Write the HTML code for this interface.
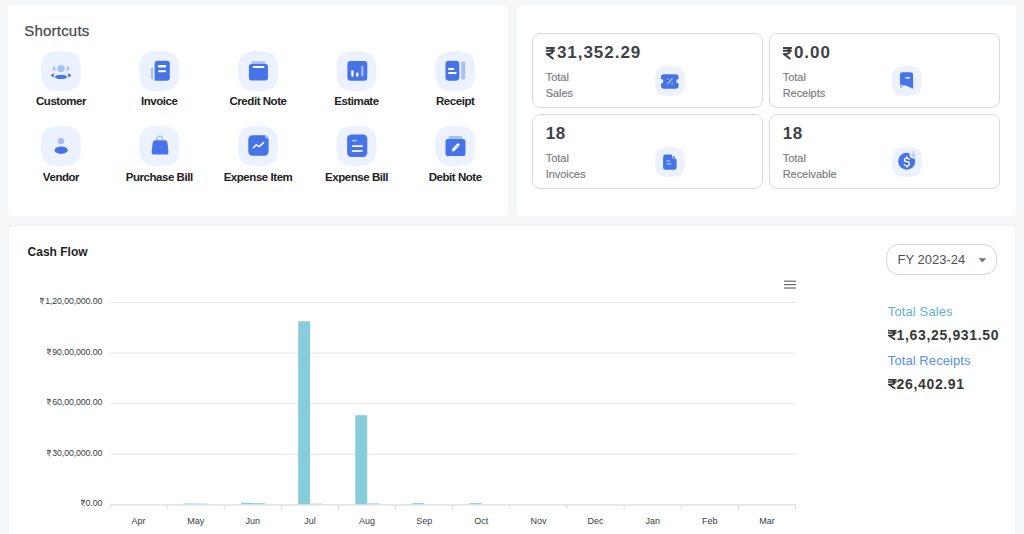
<!DOCTYPE html>
<html><head><meta charset="utf-8"><style>
html,body{margin:0;padding:0}
body{width:1024px;height:534px;overflow:hidden;background:#f5f6f8;position:relative;font-family:"Liberation Sans",sans-serif}
.t{position:absolute;white-space:nowrap;line-height:1}
.a{position:absolute;overflow:visible}
.p{position:absolute;background:#fff;border-radius:5px}
.card{position:absolute;width:229px;height:73px;border:1px solid #dadada;border-radius:8px}
.dd{position:absolute;border:1px solid #d4d4d4;border-radius:13px;box-sizing:border-box}
</style></head><body>
<div class="p" style="left:8px;top:5px;width:499.5px;height:211px"></div>
<div class="p" style="left:516.5px;top:5px;width:499.5px;height:211px"></div>
<div class="p" style="left:8.5px;top:225.5px;width:1006.5px;height:330px;box-shadow:0 0 1.5px rgba(0,0,0,0.07)"></div>
<div class="t" style="left:24.30px;top:23.10px;font-size:15px;font-weight:400;color:#484a4f;-webkit-text-stroke:0.25px #484a4f;letter-spacing:0.2px">Shortcuts</div>
<svg class="a" style="left:41px;top:51px" width="41" height="41" viewBox="0 0 41 41"><g transform="translate(0.00 0.00)"><path d="M20 0C35.5 0 40 4.5 40 20C40 35.5 35.5 40 20 40C4.5 40 0 35.5 0 20C0 4.5 4.5 0 20 0Z" fill="#ebf1fe"/><g transform="translate(5 5)"><circle cx="15" cy="12.6" r="3.7" fill="#a9c0f6"/>
   <path d="M10.2 9.6C7.4 10.4 6.6 11.6 6.6 12.6C6.6 13.6 7.4 14.8 10.2 15.6C9.2 14.6 8.9 13.6 8.9 12.6C8.9 11.6 9.2 10.6 10.2 9.6Z" fill="#a9c0f6"/>
   <path d="M19.8 9.6C22.6 10.4 23.4 11.6 23.4 12.6C23.4 13.6 22.6 14.8 19.8 15.6C20.8 14.6 21.1 13.6 21.1 12.6C21.1 11.6 20.8 10.6 19.8 9.6Z" fill="#a9c0f6"/>
   <ellipse cx="15" cy="20.9" rx="6" ry="2.2" fill="#4673e8"/>
   <path d="M9 17.2C6.4 17.8 4.8 18.6 4.8 19.6C4.8 20.4 6.2 21.1 8.6 21.6C7.9 20.9 7.6 20.2 7.6 19.6C7.6 18.8 8.1 18 9 17.2Z" fill="#4673e8"/>
   <path d="M21 17.2C23.6 17.8 25.2 18.6 25.2 19.6C25.2 20.4 23.8 21.1 21.4 21.6C22.1 20.9 22.4 20.2 22.4 19.6C22.4 18.8 21.9 18 21 17.2Z" fill="#4673e8"/></g></g></svg>
<div class="t" style="left:1.00px;top:96.47px;width:120px;text-align:center;font-size:11.5px;font-weight:700;color:#222;letter-spacing:-0.45px">Customer</div>
<svg class="a" style="left:139px;top:51px" width="41" height="41" viewBox="0 0 41 41"><g transform="translate(0.20 0.00)"><path d="M20 0C35.5 0 40 4.5 40 20C40 35.5 35.5 40 20 40C4.5 40 0 35.5 0 20C0 4.5 4.5 0 20 0Z" fill="#ebf1fe"/><g transform="translate(5 5)"><path d="M6.4 12.2L9 11.6V23.8L6.8 22.6Z" fill="#a9c0f6"/>
   <path d="M13.4 4.8H22.6Q25.6 4.8 25.6 7.8V21.7Q25.6 24.7 22.6 24.7H10.4Q10.4 24.7 10.4 22.7V7.8Q10.4 4.8 13.4 4.8Z" fill="#4673e8"/>
   <rect x="13.8" y="9" width="8.1" height="2.5" rx="1.25" fill="#fff"/>
   <rect x="13.8" y="14.3" width="8.1" height="2" rx="1" fill="#fff"/></g></g></svg>
<div class="t" style="left:99.20px;top:96.47px;width:120px;text-align:center;font-size:11.5px;font-weight:700;color:#222;letter-spacing:-0.45px">Invoice</div>
<svg class="a" style="left:238px;top:51px" width="41" height="41" viewBox="0 0 41 41"><g transform="translate(0.00 0.00)"><path d="M20 0C35.5 0 40 4.5 40 20C40 35.5 35.5 40 20 40C4.5 40 0 35.5 0 20C0 4.5 4.5 0 20 0Z" fill="#ebf1fe"/><g transform="translate(5 5)"><rect x="8.4" y="5.2" width="13.8" height="4" rx="1" fill="#a9c0f6"/>
   <rect x="5.9" y="7.9" width="19.1" height="16.5" rx="2.6" fill="#4673e8"/>
   <rect x="9.8" y="10.1" width="11.5" height="2" rx="0.6" fill="#fff"/></g></g></svg>
<div class="t" style="left:198.00px;top:96.47px;width:120px;text-align:center;font-size:11.5px;font-weight:700;color:#222;letter-spacing:-0.45px">Credit Note</div>
<svg class="a" style="left:336px;top:51px" width="41" height="41" viewBox="0 0 41 41"><g transform="translate(0.50 0.00)"><path d="M20 0C35.5 0 40 4.5 40 20C40 35.5 35.5 40 20 40C4.5 40 0 35.5 0 20C0 4.5 4.5 0 20 0Z" fill="#ebf1fe"/><g transform="translate(5 5)"><rect x="5.9" y="5" width="19.9" height="19.7" rx="3" fill="#4673e8"/>
   <rect x="9.8" y="14.3" width="2.3" height="6.5" rx="1" fill="#fff"/>
   <rect x="14.6" y="16.6" width="2.3" height="4.2" rx="1" fill="#fff"/>
   <rect x="19.7" y="9.8" width="2.2" height="10.4" rx="0.8" fill="#a9c0f6"/></g></g></svg>
<div class="t" style="left:296.50px;top:96.47px;width:120px;text-align:center;font-size:11.5px;font-weight:700;color:#222;letter-spacing:-0.45px">Estimate</div>
<svg class="a" style="left:435px;top:51px" width="41" height="41" viewBox="0 0 41 41"><g transform="translate(0.20 0.00)"><path d="M20 0C35.5 0 40 4.5 40 20C40 35.5 35.5 40 20 40C4.5 40 0 35.5 0 20C0 4.5 4.5 0 20 0Z" fill="#ebf1fe"/><g transform="translate(5 5)"><rect x="5.3" y="4.8" width="13.8" height="19.9" rx="3.4" fill="#4673e8"/>
   <rect x="7.9" y="12.1" width="6.1" height="1.9" rx="0.4" fill="#fff"/>
   <rect x="7.9" y="16" width="8.4" height="2" rx="0.4" fill="#fff"/>
   <path d="M21 5.6H25V22.4L23 24L21 22.4Z" fill="#a9c0f6"/></g></g></svg>
<div class="t" style="left:395.20px;top:96.47px;width:120px;text-align:center;font-size:11.5px;font-weight:700;color:#222;letter-spacing:-0.45px">Receipt</div>
<svg class="a" style="left:41px;top:126px" width="41" height="41" viewBox="0 0 41 41"><g transform="translate(0.00 0.00)"><path d="M20 0C35.5 0 40 4.5 40 20C40 35.5 35.5 40 20 40C4.5 40 0 35.5 0 20C0 4.5 4.5 0 20 0Z" fill="#ebf1fe"/><g transform="translate(5 5)"><circle cx="15" cy="10.1" r="3.3" fill="#a9c0f6"/>
   <ellipse cx="15.2" cy="19.2" rx="6.6" ry="3.7" fill="#4673e8"/></g></g></svg>
<div class="t" style="left:1.00px;top:171.87px;width:120px;text-align:center;font-size:11.5px;font-weight:700;color:#222;letter-spacing:-0.45px">Vendor</div>
<svg class="a" style="left:139px;top:126px" width="41" height="41" viewBox="0 0 41 41"><g transform="translate(0.20 0.00)"><path d="M20 0C35.5 0 40 4.5 40 20C40 35.5 35.5 40 20 40C4.5 40 0 35.5 0 20C0 4.5 4.5 0 20 0Z" fill="#ebf1fe"/><g transform="translate(5 5)"><path d="M12.6 9.2C12.6 6.6 13.6 5.2 15.6 5.2C17.6 5.2 18.6 6.6 18.6 9.2" fill="none" stroke="#a9c0f6" stroke-width="1.4"/>
   <path d="M11.2 9.2H20.6Q22.8 9.2 23.2 11.6L24.2 20.4Q24.6 23.6 21.4 23.6H10.2Q7 23.6 7.4 20.4L8.6 11.6Q9 9.2 11.2 9.2Z" fill="#4673e8"/></g></g></svg>
<div class="t" style="left:99.20px;top:171.87px;width:120px;text-align:center;font-size:11.5px;font-weight:700;color:#222;letter-spacing:-0.45px">Purchase Bill</div>
<svg class="a" style="left:238px;top:126px" width="41" height="41" viewBox="0 0 41 41"><g transform="translate(0.00 0.00)"><path d="M20 0C35.5 0 40 4.5 40 20C40 35.5 35.5 40 20 40C4.5 40 0 35.5 0 20C0 4.5 4.5 0 20 0Z" fill="#ebf1fe"/><g transform="translate(5 5)"><rect x="5.3" y="4.3" width="20.3" height="20.4" rx="4.2" fill="#4673e8"/>
   <path d="M22.4 4.6Q25.4 5 25.5 7.6L22.4 7.6Z" fill="#a9c0f6"/>
   <path d="M10.3 16.8L13.3 13.8L16.3 15.6L20.5 11.6" fill="none" stroke="#fff" stroke-width="1.5" stroke-linecap="round" stroke-linejoin="round"/></g></g></svg>
<div class="t" style="left:198.00px;top:171.87px;width:120px;text-align:center;font-size:11.5px;font-weight:700;color:#222;letter-spacing:-0.45px">Expense Item</div>
<svg class="a" style="left:336px;top:126px" width="41" height="41" viewBox="0 0 41 41"><g transform="translate(0.50 0.00)"><path d="M20 0C35.5 0 40 4.5 40 20C40 35.5 35.5 40 20 40C4.5 40 0 35.5 0 20C0 4.5 4.5 0 20 0Z" fill="#ebf1fe"/><g transform="translate(5 5)"><rect x="5.6" y="3.6" width="20.2" height="22.4" rx="4.2" fill="#4673e8"/>
   <rect x="10.4" y="8.7" width="5" height="1.7" rx="0.85" fill="#a9c0f6"/>
   <rect x="10.7" y="14.3" width="10.6" height="1.8" rx="0.5" fill="#fff"/>
   <rect x="10.4" y="19.1" width="10.6" height="1.8" rx="0.5" fill="#dfe7fb"/></g></g></svg>
<div class="t" style="left:296.50px;top:171.87px;width:120px;text-align:center;font-size:11.5px;font-weight:700;color:#222;letter-spacing:-0.45px">Expense Bill</div>
<svg class="a" style="left:435px;top:126px" width="41" height="41" viewBox="0 0 41 41"><g transform="translate(0.20 0.00)"><path d="M20 0C35.5 0 40 4.5 40 20C40 35.5 35.5 40 20 40C4.5 40 0 35.5 0 20C0 4.5 4.5 0 20 0Z" fill="#ebf1fe"/><g transform="translate(5 5)"><rect x="8.4" y="5" width="13.5" height="4" rx="1" fill="#a9c0f6"/>
   <rect x="5.3" y="7.9" width="20" height="17.1" rx="2.6" fill="#4673e8"/>
   <path d="M13.2 18.7L17.9 13.9" stroke="#fff" stroke-width="3" stroke-linecap="round"/>
   <path d="M15.9 14.4L17.4 15.9" stroke="#4673e8" stroke-width="0.7"/>
   <path d="M11.8 20.3L12.3 18.1L14 19.8Z" fill="#fff"/></g></g></svg>
<div class="t" style="left:395.20px;top:171.87px;width:120px;text-align:center;font-size:11.5px;font-weight:700;color:#222;letter-spacing:-0.45px">Debit Note</div>
<div class="card" style="left:532px;top:33px"></div>
<svg class="a" style="left:545.90px;top:46.60px" width="8.80" height="12.00" viewBox="0 0 9 14" preserveAspectRatio="none"><path d="M0 1.10H9M0 4.30H9M0.2 1.10H3.4C5.9 1.10 6.9 2.4 6.9 4.4C6.9 6.5 5.6 8.1 3.4 8.1H0.9L7.6 14" fill="none" stroke="#404246" stroke-width="2.2" stroke-linejoin="round"/></svg>
<div class="t" style="left:556.90px;top:44.21px;font-size:17px;font-weight:700;color:#404246;letter-spacing:0.97px">31,352.29</div>
<div class="t" style="left:545.70px;top:72.29px;font-size:11px;font-weight:400;color:#787a7e;-webkit-text-stroke:0.15px #787a7e;letter-spacing:0px">Total</div>
<div class="t" style="left:545.70px;top:88.19px;font-size:11px;font-weight:400;color:#787a7e;-webkit-text-stroke:0.15px #787a7e;letter-spacing:-0.05px">Sales</div>
<svg class="a" style="left:655px;top:66px" width="30" height="30" viewBox="0 0 30 30"><path d="M15 0C26.6 0 30 3.4 30 15C30 26.6 26.6 30 15 30C3.4 30 0 26.6 0 15C0 3.4 3.4 0 15 0Z" fill="#ebf1fe"/><path d="M9 8.2H20.6Q23.6 8.2 23.6 11.2V12.9A2.3 2.3 0 0 0 23.6 17.5V19.8Q23.6 22.8 20.6 22.8H9Q6 22.8 6 19.8V17.5A2.3 2.3 0 0 0 6 12.9V11.2Q6 8.2 9 8.2Z" fill="#4673e8"/>
   <path d="M12.6 17.8L17.2 12.6" stroke="#c6d4f8" stroke-width="1.1" stroke-linecap="round"/>
   <circle cx="12.7" cy="12.9" r="0.75" fill="#c6d4f8"/><circle cx="17.1" cy="17.6" r="0.75" fill="#c6d4f8"/></svg>
<div class="card" style="left:769px;top:33px"></div>
<svg class="a" style="left:782.90px;top:46.60px" width="8.80" height="12.00" viewBox="0 0 9 14" preserveAspectRatio="none"><path d="M0 1.10H9M0 4.30H9M0.2 1.10H3.4C5.9 1.10 6.9 2.4 6.9 4.4C6.9 6.5 5.6 8.1 3.4 8.1H0.9L7.6 14" fill="none" stroke="#404246" stroke-width="2.2" stroke-linejoin="round"/></svg>
<div class="t" style="left:793.90px;top:44.21px;font-size:17px;font-weight:700;color:#404246;letter-spacing:0.97px">0.00</div>
<div class="t" style="left:782.70px;top:72.29px;font-size:11px;font-weight:400;color:#787a7e;-webkit-text-stroke:0.15px #787a7e;letter-spacing:0px">Total</div>
<div class="t" style="left:782.70px;top:88.19px;font-size:11px;font-weight:400;color:#787a7e;-webkit-text-stroke:0.15px #787a7e;letter-spacing:-0.05px">Receipts</div>
<svg class="a" style="left:892px;top:66px" width="30" height="30" viewBox="0 0 30 30"><path d="M15 0C26.6 0 30 3.4 30 15C30 26.6 26.6 30 15 30C3.4 30 0 26.6 0 15C0 3.4 3.4 0 15 0Z" fill="#ebf1fe"/><path d="M10.7 6.3H18.4Q21.1 6.3 21.1 9V22.7L13.2 19.2L8 20.4V9Q8 6.3 10.7 6.3Z" fill="#4673e8"/>
   <path d="M8 18.2L13.2 19.2L8 22.7Z" fill="#a9c0f6"/>
   <rect x="13.2" y="11.2" width="4.8" height="1.4" rx="0.5" fill="#fff"/></svg>
<div class="card" style="left:532px;top:114px"></div>
<div class="t" style="left:545.70px;top:125.41px;font-size:17px;font-weight:700;color:#404246;letter-spacing:0.5px">18</div>
<div class="t" style="left:545.70px;top:153.29px;font-size:11px;font-weight:400;color:#787a7e;-webkit-text-stroke:0.15px #787a7e;letter-spacing:0px">Total</div>
<div class="t" style="left:545.70px;top:169.19px;font-size:11px;font-weight:400;color:#787a7e;-webkit-text-stroke:0.15px #787a7e;letter-spacing:-0.05px">Invoices</div>
<svg class="a" style="left:655px;top:147px" width="30" height="30" viewBox="0 0 30 30"><path d="M15 0C26.6 0 30 3.4 30 15C30 26.6 26.6 30 15 30C3.4 30 0 26.6 0 15C0 3.4 3.4 0 15 0Z" fill="#ebf1fe"/><path d="M10.5 7.6H16.3L21.6 12.6V20.4Q21.6 22.8 19.2 22.8H10.5Q8.1 22.8 8.1 20.4V10Q8.1 7.6 10.5 7.6Z" fill="#4673e8"/>
   <path d="M17.3 7.6L21.6 11.6H18.6Q17.3 11.6 17.3 10.3Z" fill="#fff"/>
   <path d="M18 8.4L20.8 11H18.8Q18 11 18 10.2Z" fill="#4673e8"/>
   <rect x="11.6" y="13.4" width="3.6" height="1" fill="#c9d6f7"/><rect x="11.6" y="16.4" width="4.8" height="1" fill="#c9d6f7"/></svg>
<div class="card" style="left:769px;top:114px"></div>
<div class="t" style="left:782.70px;top:125.41px;font-size:17px;font-weight:700;color:#404246;letter-spacing:0.5px">18</div>
<div class="t" style="left:782.70px;top:153.29px;font-size:11px;font-weight:400;color:#787a7e;-webkit-text-stroke:0.15px #787a7e;letter-spacing:0px">Total</div>
<div class="t" style="left:782.70px;top:169.19px;font-size:11px;font-weight:400;color:#787a7e;-webkit-text-stroke:0.15px #787a7e;letter-spacing:-0.05px">Receivable</div>
<svg class="a" style="left:892px;top:147px" width="30" height="30" viewBox="0 0 30 30"><path d="M15 0C26.6 0 30 3.4 30 15C30 26.6 26.6 30 15 30C3.4 30 0 26.6 0 15C0 3.4 3.4 0 15 0Z" fill="#ebf1fe"/><circle cx="14.7" cy="14.3" r="8.5" fill="#4673e8"/>
   <circle cx="21.6" cy="7.4" r="4.2" fill="#ebf1fe"/>
   <path d="M21.4 4.6V9.2M19.6 7.6L21.4 9.4L23.2 7.6" fill="none" stroke="#a9c0f6" stroke-width="1.1" stroke-linecap="round"/>
   <path d="M17.2 12.4Q16.5 11.1 14.8 11.1Q12.5 11.1 12.5 12.9Q12.5 14.4 14.8 14.7Q17.4 15 17.4 16.9Q17.4 18.8 14.8 18.8Q12.9 18.8 12.2 17.5M14.8 9.6V11.1M14.8 18.8V20.2" fill="none" stroke="#fff" stroke-width="1.35" stroke-linecap="round"/></svg>
<div class="t" style="left:27.60px;top:245.94px;font-size:12px;font-weight:700;color:#1e1e1e;letter-spacing:0px">Cash Flow</div>
<svg class="a" style="left:0;top:0" width="1024" height="534"><line x1="110" y1="302.5" x2="795.5" y2="302.5" stroke="#e4e4e4" stroke-width="1"/><line x1="110" y1="353.1" x2="795.5" y2="353.1" stroke="#e4e4e4" stroke-width="1"/><line x1="110" y1="403.7" x2="795.5" y2="403.7" stroke="#e4e4e4" stroke-width="1"/><line x1="110" y1="454.2" x2="795.5" y2="454.2" stroke="#e4e4e4" stroke-width="1"/><rect x="298.18" y="321.2" width="11.9" height="183.60" fill="#87ccdb"/><rect x="355.30" y="415.2" width="11.9" height="89.60" fill="#87ccdb"/><rect x="183.93" y="503.50" width="11.9" height="0.8" fill="#87ccdb"/><rect x="195.83" y="503.70" width="11.9" height="0.6" fill="#8fb0ee"/><rect x="241.05" y="502.80" width="11.9" height="1.5" fill="#87ccdb"/><rect x="252.95" y="503.30" width="11.9" height="1.0" fill="#8fb0ee"/><rect x="310.07" y="503.70" width="11.9" height="0.6" fill="#8fb0ee"/><rect x="367.20" y="503.50" width="11.9" height="0.8" fill="#8fb0ee"/><rect x="412.43" y="503.10" width="11.9" height="1.2" fill="#87ccdb"/><rect x="469.55" y="503.10" width="11.9" height="1.2" fill="#87ccdb"/><line x1="110" y1="504.8" x2="795.5" y2="504.8" stroke="#dcdcdc" stroke-width="1.2"/><line x1="110.00" y1="504.8" x2="110.00" y2="509.4" stroke="#dcdcdc" stroke-width="1"/><line x1="167.12" y1="504.8" x2="167.12" y2="509.4" stroke="#dcdcdc" stroke-width="1"/><line x1="224.25" y1="504.8" x2="224.25" y2="509.4" stroke="#dcdcdc" stroke-width="1"/><line x1="281.38" y1="504.8" x2="281.38" y2="509.4" stroke="#dcdcdc" stroke-width="1"/><line x1="338.50" y1="504.8" x2="338.50" y2="509.4" stroke="#dcdcdc" stroke-width="1"/><line x1="395.62" y1="504.8" x2="395.62" y2="509.4" stroke="#dcdcdc" stroke-width="1"/><line x1="452.75" y1="504.8" x2="452.75" y2="509.4" stroke="#dcdcdc" stroke-width="1"/><line x1="509.88" y1="504.8" x2="509.88" y2="509.4" stroke="#dcdcdc" stroke-width="1"/><line x1="567.00" y1="504.8" x2="567.00" y2="509.4" stroke="#dcdcdc" stroke-width="1"/><line x1="624.12" y1="504.8" x2="624.12" y2="509.4" stroke="#dcdcdc" stroke-width="1"/><line x1="681.25" y1="504.8" x2="681.25" y2="509.4" stroke="#dcdcdc" stroke-width="1"/><line x1="738.38" y1="504.8" x2="738.38" y2="509.4" stroke="#dcdcdc" stroke-width="1"/><line x1="795.50" y1="504.8" x2="795.50" y2="509.4" stroke="#dcdcdc" stroke-width="1"/><line x1="784" y1="281.2" x2="796" y2="281.2" stroke="#5c5c5c" stroke-width="1.1"/><line x1="784" y1="284.6" x2="796" y2="284.6" stroke="#5c5c5c" stroke-width="1.1"/><line x1="784" y1="288" x2="796" y2="288" stroke="#5c5c5c" stroke-width="1.1"/></svg>
<div class="t" style="left:-17.80px;top:297.05px;width:120px;text-align:right;font-size:8.8px;font-weight:400;color:#373d3f;letter-spacing:-0.12px">1,20,00,000.00</div>
<svg class="a" style="left:40.32px;top:298.00px" width="3.90" height="6.40" viewBox="0 0 9 14" preserveAspectRatio="none"><path d="M0 0.85H9M0 4.30H9M0.2 0.85H3.4C5.9 0.85 6.9 2.4 6.9 4.4C6.9 6.5 5.6 8.1 3.4 8.1H0.9L7.6 14" fill="none" stroke="#373d3f" stroke-width="1.7" stroke-linejoin="round"/></svg>
<div class="t" style="left:-17.80px;top:347.65px;width:120px;text-align:right;font-size:8.8px;font-weight:400;color:#373d3f;letter-spacing:-0.12px">90,00,000.00</div>
<svg class="a" style="left:47.41px;top:348.60px" width="3.90" height="6.40" viewBox="0 0 9 14" preserveAspectRatio="none"><path d="M0 0.85H9M0 4.30H9M0.2 0.85H3.4C5.9 0.85 6.9 2.4 6.9 4.4C6.9 6.5 5.6 8.1 3.4 8.1H0.9L7.6 14" fill="none" stroke="#373d3f" stroke-width="1.7" stroke-linejoin="round"/></svg>
<div class="t" style="left:-17.80px;top:398.25px;width:120px;text-align:right;font-size:8.8px;font-weight:400;color:#373d3f;letter-spacing:-0.12px">60,00,000.00</div>
<svg class="a" style="left:47.41px;top:399.20px" width="3.90" height="6.40" viewBox="0 0 9 14" preserveAspectRatio="none"><path d="M0 0.85H9M0 4.30H9M0.2 0.85H3.4C5.9 0.85 6.9 2.4 6.9 4.4C6.9 6.5 5.6 8.1 3.4 8.1H0.9L7.6 14" fill="none" stroke="#373d3f" stroke-width="1.7" stroke-linejoin="round"/></svg>
<div class="t" style="left:-17.80px;top:448.75px;width:120px;text-align:right;font-size:8.8px;font-weight:400;color:#373d3f;letter-spacing:-0.12px">30,00,000.00</div>
<svg class="a" style="left:47.41px;top:449.70px" width="3.90" height="6.40" viewBox="0 0 9 14" preserveAspectRatio="none"><path d="M0 0.85H9M0 4.30H9M0.2 0.85H3.4C5.9 0.85 6.9 2.4 6.9 4.4C6.9 6.5 5.6 8.1 3.4 8.1H0.9L7.6 14" fill="none" stroke="#373d3f" stroke-width="1.7" stroke-linejoin="round"/></svg>
<div class="t" style="left:-17.80px;top:499.35px;width:120px;text-align:right;font-size:8.8px;font-weight:400;color:#373d3f;letter-spacing:-0.12px">0.00</div>
<svg class="a" style="left:80.67px;top:500.30px" width="3.90" height="6.40" viewBox="0 0 9 14" preserveAspectRatio="none"><path d="M0 0.85H9M0 4.30H9M0.2 0.85H3.4C5.9 0.85 6.9 2.4 6.9 4.4C6.9 6.5 5.6 8.1 3.4 8.1H0.9L7.6 14" fill="none" stroke="#373d3f" stroke-width="1.7" stroke-linejoin="round"/></svg>
<div class="t" style="left:113.56px;top:516.78px;width:50px;text-align:center;font-size:9px;font-weight:400;color:#373d3f;letter-spacing:0px">Apr</div>
<div class="t" style="left:170.69px;top:516.78px;width:50px;text-align:center;font-size:9px;font-weight:400;color:#373d3f;letter-spacing:0px">May</div>
<div class="t" style="left:227.81px;top:516.78px;width:50px;text-align:center;font-size:9px;font-weight:400;color:#373d3f;letter-spacing:0px">Jun</div>
<div class="t" style="left:284.94px;top:516.78px;width:50px;text-align:center;font-size:9px;font-weight:400;color:#373d3f;letter-spacing:0px">Jul</div>
<div class="t" style="left:342.06px;top:516.78px;width:50px;text-align:center;font-size:9px;font-weight:400;color:#373d3f;letter-spacing:0px">Aug</div>
<div class="t" style="left:399.19px;top:516.78px;width:50px;text-align:center;font-size:9px;font-weight:400;color:#373d3f;letter-spacing:0px">Sep</div>
<div class="t" style="left:456.31px;top:516.78px;width:50px;text-align:center;font-size:9px;font-weight:400;color:#373d3f;letter-spacing:0px">Oct</div>
<div class="t" style="left:513.44px;top:516.78px;width:50px;text-align:center;font-size:9px;font-weight:400;color:#373d3f;letter-spacing:0px">Nov</div>
<div class="t" style="left:570.56px;top:516.78px;width:50px;text-align:center;font-size:9px;font-weight:400;color:#373d3f;letter-spacing:0px">Dec</div>
<div class="t" style="left:627.69px;top:516.78px;width:50px;text-align:center;font-size:9px;font-weight:400;color:#373d3f;letter-spacing:0px">Jan</div>
<div class="t" style="left:684.81px;top:516.78px;width:50px;text-align:center;font-size:9px;font-weight:400;color:#373d3f;letter-spacing:0px">Feb</div>
<div class="t" style="left:741.94px;top:516.78px;width:50px;text-align:center;font-size:9px;font-weight:400;color:#373d3f;letter-spacing:0px">Mar</div>
<div class="dd" style="left:886px;top:244px;width:111px;height:31px"></div>
<div class="t" style="left:897.60px;top:253.40px;font-size:13px;font-weight:400;color:#505254;letter-spacing:0px">FY 2023-24</div>
<svg class="a" style="left:978px;top:258px" width="9" height="5" viewBox="0 0 9 5"><path d="M0.5 0.3H8.3L4.4 4.6Z" fill="#757575"/></svg>
<div class="t" style="left:887.80px;top:305.30px;font-size:13px;font-weight:400;color:#5fb3cf;letter-spacing:0.12px">Total Sales</div>
<svg class="a" style="left:888.10px;top:330.10px" width="8.50" height="9.60" viewBox="0 0 9 14" preserveAspectRatio="none"><path d="M0 1.10H9M0 4.30H9M0.2 1.10H3.4C5.9 1.10 6.9 2.4 6.9 4.4C6.9 6.5 5.6 8.1 3.4 8.1H0.9L7.6 14" fill="none" stroke="#333" stroke-width="2.2" stroke-linejoin="round"/></svg>
<div class="t" style="left:896.60px;top:327.85px;font-size:14px;font-weight:700;color:#383838;letter-spacing:0.65px">1,63,25,931.50</div>
<div class="t" style="left:887.80px;top:353.90px;font-size:13px;font-weight:400;color:#5b8ded;letter-spacing:0.08px">Total Receipts</div>
<svg class="a" style="left:888.10px;top:379.00px" width="8.50" height="9.60" viewBox="0 0 9 14" preserveAspectRatio="none"><path d="M0 1.10H9M0 4.30H9M0.2 1.10H3.4C5.9 1.10 6.9 2.4 6.9 4.4C6.9 6.5 5.6 8.1 3.4 8.1H0.9L7.6 14" fill="none" stroke="#333" stroke-width="2.2" stroke-linejoin="round"/></svg>
<div class="t" style="left:896.60px;top:376.75px;font-size:14px;font-weight:700;color:#383838;letter-spacing:0.65px">26,402.91</div>
</body></html>
